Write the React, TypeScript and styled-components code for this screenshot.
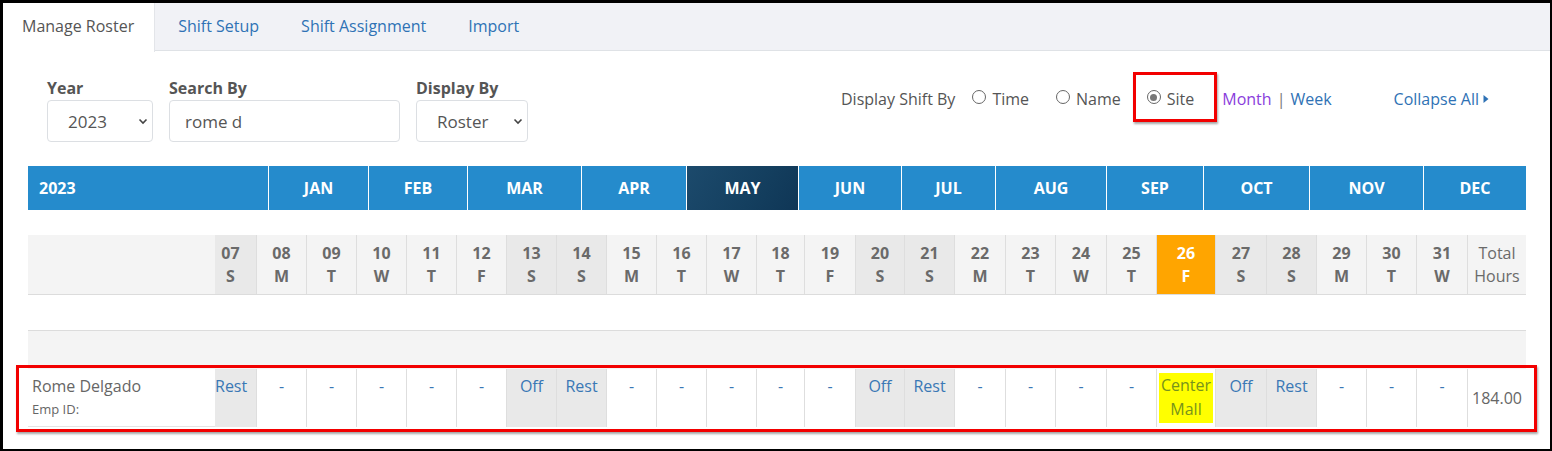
import React from 'react';
import styled, { createGlobalStyle, css } from 'styled-components';

const GlobalStyle = createGlobalStyle`
  html, body {
    margin: 0;
    padding: 0;
    background: #000;
  }
  body {
    font-family: 'Open Sans', 'Liberation Sans', sans-serif;
    color: #555;
  }
  * { box-sizing: border-box; }
`;

type DayKind = 'normal' | 'weekend' | 'today';

interface Day {
  num: string;
  letter: string;
  kind: DayKind;
  value: string;
  width: number;
}

const NAME_COL = 187;
const TOTAL_COL = 58;

const days: Day[] = [
  { num: '07', letter: 'S', kind: 'weekend', value: 'Rest', width: 42 },
  { num: '08', letter: 'M', kind: 'normal', value: '-', width: 50 },
  { num: '09', letter: 'T', kind: 'normal', value: '-', width: 50 },
  { num: '10', letter: 'W', kind: 'normal', value: '-', width: 50 },
  { num: '11', letter: 'T', kind: 'normal', value: '-', width: 50 },
  { num: '12', letter: 'F', kind: 'normal', value: '-', width: 50 },
  { num: '13', letter: 'S', kind: 'weekend', value: 'Off', width: 50 },
  { num: '14', letter: 'S', kind: 'weekend', value: 'Rest', width: 50 },
  { num: '15', letter: 'M', kind: 'normal', value: '-', width: 50 },
  { num: '16', letter: 'T', kind: 'normal', value: '-', width: 50 },
  { num: '17', letter: 'W', kind: 'normal', value: '-', width: 50 },
  { num: '18', letter: 'T', kind: 'normal', value: '-', width: 48 },
  { num: '19', letter: 'F', kind: 'normal', value: '-', width: 51 },
  { num: '20', letter: 'S', kind: 'weekend', value: 'Off', width: 49 },
  { num: '21', letter: 'S', kind: 'weekend', value: 'Rest', width: 50 },
  { num: '22', letter: 'M', kind: 'normal', value: '-', width: 51 },
  { num: '23', letter: 'T', kind: 'normal', value: '-', width: 50 },
  { num: '24', letter: 'W', kind: 'normal', value: '-', width: 51 },
  { num: '25', letter: 'T', kind: 'normal', value: '-', width: 50 },
  { num: '26', letter: 'F', kind: 'today', value: 'Center Mall', width: 59 },
  { num: '27', letter: 'S', kind: 'weekend', value: 'Off', width: 51 },
  { num: '28', letter: 'S', kind: 'weekend', value: 'Rest', width: 50 },
  { num: '29', letter: 'M', kind: 'normal', value: '-', width: 50 },
  { num: '30', letter: 'T', kind: 'normal', value: '-', width: 50 },
  { num: '31', letter: 'W', kind: 'normal', value: '-', width: 51 },
];

const gridCols = [NAME_COL, ...days.map((d) => d.width), TOTAL_COL].map((w) => `${w}px`).join(' ');

const months = [
  { label: 'JAN', width: 100 },
  { label: 'FEB', width: 99 },
  { label: 'MAR', width: 114 },
  { label: 'APR', width: 105 },
  { label: 'MAY', width: 112, active: true },
  { label: 'JUN', width: 103 },
  { label: 'JUL', width: 94 },
  { label: 'AUG', width: 111 },
  { label: 'SEP', width: 97 },
  { label: 'OCT', width: 106 },
  { label: 'NOV', width: 114 },
  { label: 'DEC', width: 102 },
];

const monthCols = ['241px', ...months.map((m) => `${m.width}px`)].join(' ');

const Frame = styled.div`
  margin: 3px 2px 2px 3px;
  height: 446px;
  background: #fff;
  overflow: hidden;
`;

const TabBar = styled.div`
  display: flex;
  height: 48px;
  background: #f1f2f6;
  border-bottom: 1px solid #dfe2e6;
`;

const Tab = styled.div<{ $active?: boolean }>`
  padding: 0 21px;
  font-size: 16px;
  line-height: 46px;
  color: #2f72b5;
  ${(p) =>
    p.$active &&
    css`
      background: #fff;
      color: #555;
      height: 49px;
      padding: 0 20px 0 19px;
      border-right: 1px solid #e3e5e9;
      margin-right: 2px;
    `}
`;

const Toolbar = styled.div`
  display: flex;
  align-items: flex-start;
  padding: 25px 61px 0 44px;
  height: 115px;
`;

const Field = styled.div<{ $w: number }>`
  display: flex;
  flex-direction: column;
  width: ${(p) => p.$w}px;
  margin-right: 16px;
`;

const Label = styled.label`
  font-size: 16px;
  font-weight: 700;
  line-height: 24px;
  color: #555;
`;

const SelectWrap = styled.div`
  position: relative;
  height: 42px;
`;

const Select = styled.select`
  appearance: none;
  width: 100%;
  height: 42px;
  border: 1px solid #dcdfe3;
  border-radius: 4px;
  background: #fff;
  font-family: 'Open Sans', 'Liberation Sans', sans-serif;
  font-size: 17px;
  color: #555;
  padding: 0 34px 0 20px;
  outline: none;
`;

const Chevron = styled.svg`
  position: absolute;
  right: 5px;
  top: 17px;
  pointer-events: none;
`;

const TextInput = styled.input`
  height: 42px;
  border: 1px solid #dcdfe3;
  border-radius: 4px;
  padding: 0 15px;
  font-family: 'Open Sans', 'Liberation Sans', sans-serif;
  font-size: 17px;
  color: #555;
  outline: none;
`;

const ShiftOptions = styled.div`
  display: flex;
  align-items: center;
  margin-left: auto;
  margin-top: -4px;
  padding-top: 4px;
  height: 50px;
  font-size: 16px;
  color: #555;
`;

const OptionCaption = styled.span`
  margin-right: 17px;
`;

const RadioItem = styled.span<{ $boxed?: boolean }>`
  display: inline-flex;
  align-items: center;
  gap: 6px;
  margin-right: 27px;
  ${(p) =>
    p.$boxed &&
    css`
      height: 50px;
      margin-top: -4px;
      padding: 4px 20px 0 11px;
      margin-left: -15px;
      margin-right: 5px;
      border: 3px solid #f20000;
      box-shadow: 1px 2px 2px rgba(0, 0, 0, 0.35);
    `}
`;

const RadioDot = styled.span<{ $checked?: boolean }>`
  width: 14px;
  height: 14px;
  border-radius: 50%;
  border: 1.5px solid #666;
  display: inline-flex;
  align-items: center;
  justify-content: center;
  margin-top: -4px;
  &::after {
    content: '';
    width: 7px;
    height: 7px;
    border-radius: 50%;
    background: ${(p) => (p.$checked ? '#777' : 'transparent')};
  }
`;

const LinkText = styled.span<{ $visited?: boolean }>`
  color: ${(p) => (p.$visited ? '#8a3ddc' : '#2f72b5')};
`;

const Pipe = styled.span`
  color: #777;
  margin: 0 5px;
`;

const CollapseLink = styled.span`
  color: #2f72b5;
  margin-left: 62px;
  display: inline-flex;
  align-items: center;
  gap: 4px;
`;

const TableArea = styled.div`
  margin: 0 24px 0 25px;
`;

const MonthBar = styled.div`
  display: grid;
  grid-template-columns: ${monthCols};
  height: 44px;
  background: #258bcc;
`;

const MonthCell = styled.div<{ $active?: boolean; $year?: boolean }>`
  display: flex;
  align-items: center;
  justify-content: ${(p) => (p.$year ? 'flex-start' : 'center')};
  padding-left: ${(p) => (p.$year ? '11px' : '0')};
  border-right: 1px solid #fff;
  color: #fff;
  font-weight: 700;
  font-size: 16px;
  ${(p) =>
    p.$active &&
    css`
      background: linear-gradient(120deg, #1c4a6c 0%, #143f5f 60%, #0f3656 100%);
    `}
  &:last-child {
    border-right: none;
  }
`;

const DayHeader = styled.div`
  display: grid;
  grid-template-columns: ${gridCols};
  margin-top: 25px;
  height: 60px;
  background: #f4f4f4;
  border-bottom: 1px solid #dcdcdc;
`;

const dayBg = (kind: DayKind) =>
  kind === 'weekend' ? '#e9e9e9' : kind === 'today' ? '#ffa500' : 'transparent';

const DayHead = styled.div<{ $kind: DayKind }>`
  display: flex;
  flex-direction: column;
  align-items: center;
  padding-top: 7px;
  font-weight: 700;
  font-size: 16px;
  line-height: 23px;
  color: ${(p) => (p.$kind === 'today' ? '#fff' : '#6a6a6a')};
  background: ${(p) => dayBg(p.$kind)};
  border-right: 1px solid #dedede;
  &:nth-child(2) {
    padding-right: 10px;
  }
`;

const TotalHead = styled.div`
  padding-top: 7px;
  font-size: 16px;
  line-height: 23px;
  color: #6a6a6a;
  text-align: center;
`;

const Spacer = styled.div`
  height: 35px;
`;

const GroupRow = styled.div`
  height: 39px;
  background: #f4f4f4;
  border-top: 1px solid #dcdcdc;
`;

const DataRow = styled.div`
  position: relative;
  display: grid;
  grid-template-columns: ${gridCols};
  height: 58px;
  &::after {
    content: '';
    position: absolute;
    top: -4px;
    bottom: -5px;
    left: -12px;
    right: -11px;
    border: 3px solid #f20000;
    box-shadow: 1px 2px 2px rgba(0, 0, 0, 0.35);
    pointer-events: none;
  }
`;

const NameCell = styled.div`
  padding: 4px 0 0 4px;
  border-bottom: 1px solid #e4e4e4;
`;

const EmpName = styled.div`
  font-size: 16px;
  line-height: 26px;
  color: #666;
`;

const EmpId = styled.div`
  font-size: 13px;
  line-height: 21px;
  color: #666;
`;

const ShiftCell = styled.div<{ $kind: DayKind }>`
  padding-top: 5px;
  text-align: center;
  font-size: 16px;
  line-height: 24px;
  color: #3a78b5;
  background: ${(p) => (p.$kind === 'weekend' ? '#e9e9e9' : '#fff')};
  border-right: 1px solid #dedede;
  &:nth-child(2) {
    padding-right: 9px;
  }
`;

const SiteBlock = styled.div`
  margin: -1px 2px 0;
  background: #ffff00;
  color: #77931c;
  line-height: 24px;
  padding-bottom: 2px;
`;

const TotalCell = styled.div`
  display: flex;
  align-items: center;
  justify-content: center;
  font-size: 16px;
  color: #666;
`;

function ChevronIcon() {
  return (
    <Chevron width="10" height="8" viewBox="0 0 10 8">
      <path d="M1.5 2.5 L5 6 L8.5 2.5" fill="none" stroke="#444" strokeWidth="1.6" />
    </Chevron>
  );
}

export default function App() {
  return (
    <>
      <GlobalStyle />
      <Frame>
        <TabBar>
          <Tab $active>Manage Roster</Tab>
          <Tab>Shift Setup</Tab>
          <Tab>Shift Assignment</Tab>
          <Tab>Import</Tab>
        </TabBar>

        <Toolbar>
          <Field $w={106}>
            <Label>Year</Label>
            <SelectWrap>
              <Select defaultValue="2023">
                <option>2023</option>
              </Select>
              <ChevronIcon />
            </SelectWrap>
          </Field>
          <Field $w={231}>
            <Label>Search By</Label>
            <TextInput defaultValue="rome d" />
          </Field>
          <Field $w={112}>
            <Label>Display By</Label>
            <SelectWrap>
              <Select defaultValue="Roster">
                <option>Roster</option>
              </Select>
              <ChevronIcon />
            </SelectWrap>
          </Field>

          <ShiftOptions>
            <OptionCaption>Display Shift By</OptionCaption>
            <RadioItem>
              <RadioDot />
              Time
            </RadioItem>
            <RadioItem>
              <RadioDot />
              Name
            </RadioItem>
            <RadioItem $boxed>
              <RadioDot $checked />
              Site
            </RadioItem>
            <LinkText $visited>Month</LinkText>
            <Pipe>|</Pipe>
            <LinkText>Week</LinkText>
            <CollapseLink>
              Collapse All
              <svg width="6" height="10" viewBox="0 0 6 10">
                <path d="M0.5 1 L5.5 5 L0.5 9 Z" fill="#2f72b5" />
              </svg>
            </CollapseLink>
          </ShiftOptions>
        </Toolbar>

        <TableArea>
          <MonthBar>
            <MonthCell $year>2023</MonthCell>
            {months.map((m) => (
              <MonthCell key={m.label} $active={m.active}>
                {m.label}
              </MonthCell>
            ))}
          </MonthBar>

          <DayHeader>
            <div />
            {days.map((d) => (
              <DayHead key={d.num} $kind={d.kind}>
                <span>{d.num}</span>
                <span>{d.letter}</span>
              </DayHead>
            ))}
            <TotalHead>
              Total
              <br />
              Hours
            </TotalHead>
          </DayHeader>

          <Spacer />
          <GroupRow />

          <DataRow>
            <NameCell>
              <EmpName>Rome Delgado</EmpName>
              <EmpId>Emp ID:</EmpId>
            </NameCell>
            {days.map((d) => (
              <ShiftCell key={d.num} $kind={d.kind === 'weekend' ? 'weekend' : 'normal'}>
                {d.kind === 'today' ? <SiteBlock>Center Mall</SiteBlock> : d.value}
              </ShiftCell>
            ))}
            <TotalCell>184.00</TotalCell>
          </DataRow>
        </TableArea>
      </Frame>
    </>
  );
}
